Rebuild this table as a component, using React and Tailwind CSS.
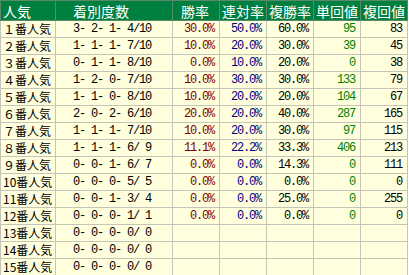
import React from 'react';

const rows = [
  ['１番人気', '3- 2- 1- 4/10', '30.0%', '50.0%', '60.0%', '95', '83'],
  ['２番人気', '1- 1- 1- 7/10', '10.0%', '20.0%', '30.0%', '39', '45'],
  ['３番人気', '0- 1- 1- 8/10', '0.0%', '10.0%', '20.0%', '0', '38'],
  ['４番人気', '1- 2- 0- 7/10', '10.0%', '30.0%', '30.0%', '133', '79'],
  ['５番人気', '1- 1- 0- 8/10', '10.0%', '20.0%', '20.0%', '104', '67'],
  ['６番人気', '2- 0- 2- 6/10', '20.0%', '20.0%', '40.0%', '287', '165'],
  ['７番人気', '1- 1- 1- 7/10', '10.0%', '20.0%', '30.0%', '97', '115'],
  ['８番人気', '1- 1- 1- 6/ 9', '11.1%', '22.2%', '33.3%', '406', '213'],
  ['９番人気', '0- 0- 1- 6/ 7', '0.0%', '0.0%', '14.3%', '0', '111'],
  ['10番人気', '0- 0- 0- 5/ 5', '0.0%', '0.0%', '0.0%', '0', '0'],
  ['11番人気', '0- 0- 1- 3/ 4', '0.0%', '0.0%', '25.0%', '0', '255'],
  ['12番人気', '0- 0- 0- 1/ 1', '0.0%', '0.0%', '0.0%', '0', '0'],
  ['13番人気', '0- 0- 0- 0/ 0', '', '', '', '', ''],
  ['14番人気', '0- 0- 0- 0/ 0', '', '', '', '', ''],
  ['15番人気', '0- 0- 0- 0/ 0', '', '', '', '', ''],
];

const heads = ['人気', '着別度数', '勝率', '連対率', '複勝率', '単回値', '複回値'];
const headPad = ['pl-[2px]', 'pl-[17px]', 'pl-[8px]', 'pl-[2px]', 'pl-[2px]', 'pl-[2px]', 'pl-[2px]'];
const widths = ['w-[55px]', 'w-[117px]', 'w-[47px]', 'w-[47px]', 'w-[47px]', 'w-[47px]', 'w-[47px]'];
const colors = ['text-black', 'text-black', 'text-[#800000]', 'text-[#000080]', 'text-black', 'text-[#008000]', 'text-black'];

const jp = { fontFamily: '"Noto Sans CJK JP", sans-serif' };
const mono = { fontFamily: '"Liberation Mono", "DejaVu Sans Mono", monospace' };

export default function App() {
  return (
    <div className="w-[409px] h-[275px] bg-white overflow-hidden">
      <table className="table-fixed border-collapse w-[408px]">
        <colgroup>
          {widths.map((w, i) => <col key={i} className={w} />)}
        </colgroup>
        <thead>
          <tr className="bg-[#008040]">
            {heads.map((h, i) => (
              <th key={i} className="border border-[#5a8a6a] p-0 font-normal">
                <div
                  style={jp}
                  className={`h-[19px] flex items-center overflow-hidden whitespace-nowrap text-white text-[14px] leading-none ${headPad[i]}`}
                >
                  {h}
                </div>
              </th>
            ))}
          </tr>
        </thead>
        <tbody>
          {rows.map((r, ri) => (
            <tr key={ri} className="bg-[#ffffdd]">
              {r.map((c, ci) => (
                <td key={ci} className="border border-[#c4c4b8] p-0">
                  <div
                    style={ci === 0 ? jp : mono}
                    className={`h-[16px] flex items-center overflow-hidden whitespace-pre leading-none ${
                      ci === 0
                        ? 'text-[12px] pl-[2px] justify-start'
                        : ci === 1
                        ? 'text-[12px] tracking-[-1.2px] pl-[17px] justify-start'
                        : 'text-[12px] tracking-[-1.2px] pr-[5px] justify-end'
                    } ${colors[ci]}`}
                  >
                    {c}
                  </div>
                </td>
              ))}
            </tr>
          ))}
        </tbody>
      </table>
    </div>
  );
}
